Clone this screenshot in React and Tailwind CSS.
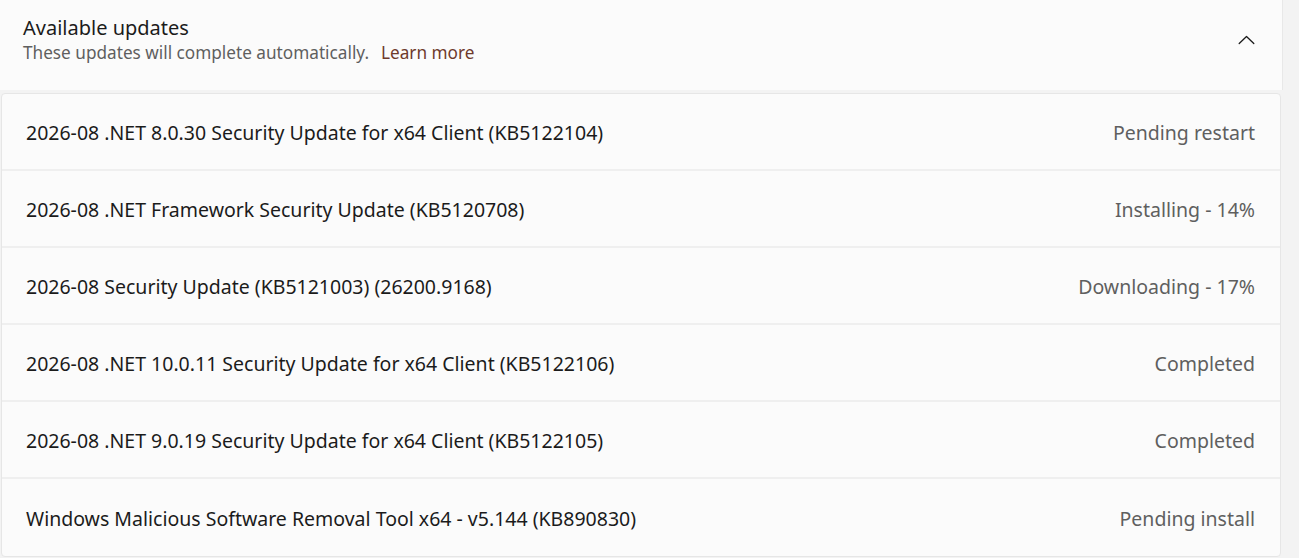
const updates = [
  { name: '2026-08 .NET 8.0.30 Security Update for x64 Client (KB5122104)', status: 'Pending restart' },
  { name: '2026-08 .NET Framework Security Update (KB5120708)', status: 'Installing - 14%' },
  { name: '2026-08 Security Update (KB5121003) (26200.9168)', status: 'Downloading - 17%' },
  { name: '2026-08 .NET 10.0.11 Security Update for x64 Client (KB5122106)', status: 'Completed' },
  { name: '2026-08 .NET 9.0.19 Security Update for x64 Client (KB5122105)', status: 'Completed' },
  { name: 'Windows Malicious Software Removal Tool x64 - v5.144 (KB890830)', status: 'Pending install' },
]

const Chevron = () => (
  <svg width="17" height="10" viewBox="0 0 17 10" fill="none" className="mt-[-10px]">
    <path d="M1.2 8.5 L8.5 1.5 L15.8 8.5" stroke="#1b1b1b" strokeWidth="1.3" strokeLinecap="round" strokeLinejoin="round" />
  </svg>
)

const App = () => {
  return (
    <div className="w-[1299px] h-[558px] overflow-hidden bg-[#f3f3f3] font-['Noto_Sans',sans-serif]">
      {/* section header */}
      <div className="w-[1283px] h-[90px] bg-[#fbfbfb] border-r border-[#e8e8e8] flex items-center justify-between pl-[23px] pr-[27px]">
        <div className="flex flex-col -mt-[10px]">
          <h2 className="text-[20px] leading-[26px] text-[#1b1b1b]">Available updates</h2>
          <p className="text-[17.2px] leading-[24px] text-[#5f5f5f]">
            These updates will complete automatically.
            <a href="#" className="ml-[12px] text-[#6e3a2c]">Learn more</a>
          </p>
        </div>
        <Chevron />
      </div>

      {/* update list */}
      <div className="mt-[3px] ml-[1px] w-[1280px] bg-[#fbfbfb] border border-[#e6e6e6] rounded-[4px]">
        {updates.map((u, i) => (
          <div
            key={i}
            className={`h-[77px] flex items-center justify-between pl-[24px] pr-[25px] pt-[3px] ${i < updates.length - 1 ? 'border-b-2 border-[#efefef]' : ''}`}
          >
            <span className="text-[19.5px] text-[#1b1b1b]">{u.name}</span>
            <span className="text-[19.5px] text-[#5f5f5f]">{u.status}</span>
          </div>
        ))}
      </div>
    </div>
  )
}

export default App
